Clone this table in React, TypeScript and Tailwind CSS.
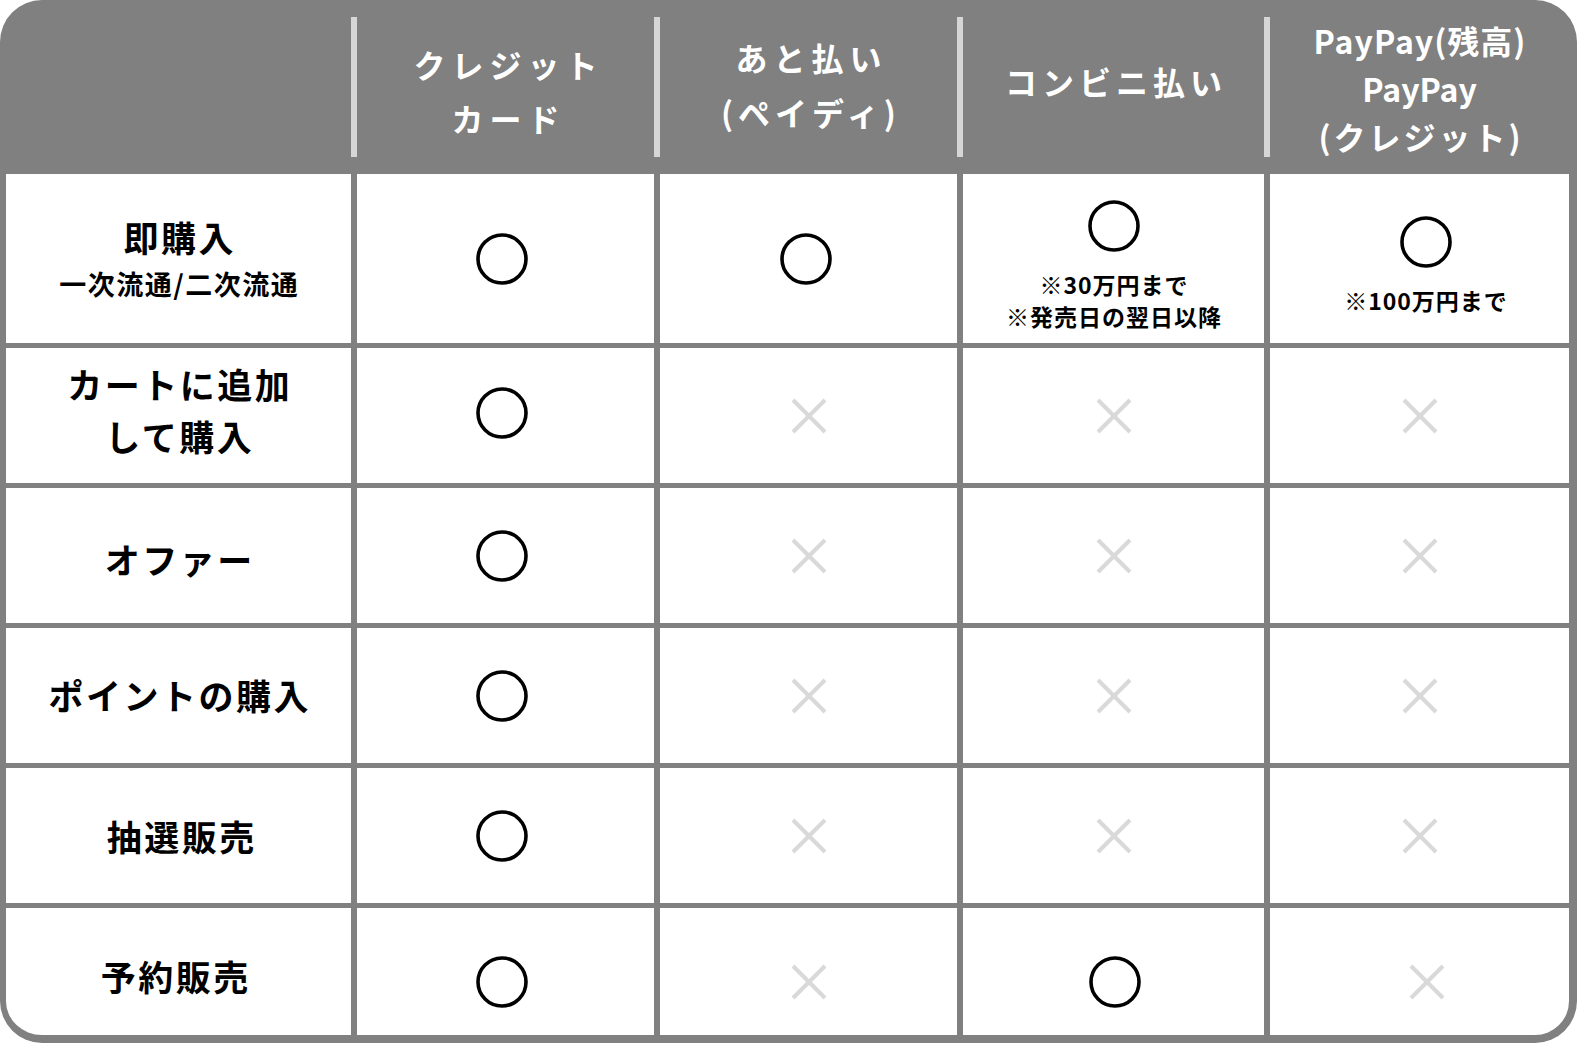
import React from 'react';

type Mark = 'o' | 'x';

interface Cell {
  mark: Mark;
  notes?: string[];
  cls?: string;
}

interface Row {
  label: string[];
  sub?: string;
  labelCls: string;
  cells: Cell[];
  last?: boolean;
}

const o: Cell = { mark: 'o', cls: 'pr-[8px]' };
const x: Cell = { mark: 'x' };

//支払い方法ごとの対応表
const rows: Row[] = [
  {
    label: ['即購入'],
    sub: '一次流通/二次流通',
    labelCls: 'pb-[8px]',
    cells: [
      o,
      { mark: 'o', cls: 'pr-[6px]' },
      { mark: 'o', notes: ['※30万円まで', '※発売日の翌日以降'], cls: 'pt-[15px]' },
      { mark: 'o', notes: ['※100万円まで'], cls: 'pt-[15px] pl-[12px]' },
    ],
  },
  { label: ['カートに追加', 'して購入'], labelCls: 'pb-[12px]', cells: [{ mark: 'o', cls: 'pr-[8px] pb-[6px]' }, x, x, x] },
  { label: ['オファー'], labelCls: 'pt-[6px]', cells: [o, x, x, x] },
  { label: ['ポイントの購入'], labelCls: 'pb-[2px]', cells: [o, x, x, x] },
  { label: ['抽選販売'], labelCls: 'pl-[4px]', cells: [o, x, x, x] },
  { label: ['予約販売'], labelCls: 'pt-[8px] pr-[8px]', cells: [o, { mark: 'x', cls: 'pt-[20px]' }, { mark: 'o', cls: 'pt-[20px] pl-[2px]' }, { mark: 'x', cls: 'pt-[20px] pl-[14px]' }], last: true },
];

const Circle = () => (
  <svg width="52" height="52" viewBox="0 0 52 52" className="shrink-0">
    <circle cx="26" cy="26" r="24" fill="none" stroke="#000" strokeWidth="3.6" />
  </svg>
);

const Cross = () => (
  <svg width="36" height="36" viewBox="0 0 36 36" className="shrink-0">
    <line x1="2" y1="2" x2="34" y2="34" stroke="#d9d9d9" strokeWidth="4" />
    <line x1="34" y1="2" x2="2" y2="34" stroke="#d9d9d9" strokeWidth="4" />
  </svg>
);

const headerCell = '-ml-[6px] mt-[11px] h-[140px] self-start border-l-[6px] border-l-[#d6d6d6] flex flex-col items-center justify-center text-white font-bold text-[32px]';

export default function App() {
  return (
    <div className="w-[1577px] h-[1046px] bg-white" style={{ fontFamily: '"Noto Sans CJK JP", "Noto Sans", sans-serif' }}>
      <div className="w-[1577px] h-[1043px] rounded-[42px] border-l-[6px] border-t-[6px] border-r-[8px] border-b-[8px] border-[#808080] bg-[#808080] overflow-hidden grid grid-cols-[345px_297px_297px_301px_1fr] grid-rows-[163px_169px_135px_135px_135px_135px_127px] gap-x-[6px] gap-y-[5px]">
        {/* ヘッダー */}
        <div />
        <div className={`${headerCell} pt-[8px]`}>
          <span className="leading-[54px] tracking-[6px] pl-[6px]">クレジット</span>
          <span className="leading-[54px] tracking-[6px] pl-[6px]">カード</span>
        </div>
        <div className={`${headerCell} pb-[4px]`}>
          <span className="leading-[55px] tracking-[6px] pl-[6px]">あと払い</span>
          <span className="leading-[55px] tracking-[5px] pl-[5px]">(ペイディ)</span>
        </div>
        <div className={`${headerCell} pb-[12px]`}>
          <span className="leading-[54px] tracking-[5px] pl-[5px]">コンビニ払い</span>
        </div>
        <div className={`${headerCell} pt-[2px]`}>
          <span className="leading-[48px] tracking-[1px] pl-[1px]">PayPay(残高)</span>
          <span className="leading-[48px] tracking-[0px]">PayPay</span>
          <span className="leading-[48px] tracking-[3px] pl-[3px]">(クレジット)</span>
        </div>

        {/* 本体 */}
        {rows.map((row, ri) => (
          <React.Fragment key={ri}>
            <div className={`bg-white flex flex-col items-center justify-center text-black font-bold ${row.labelCls}`}>
              {row.label.map((l) => (
                <span key={l} className="text-[35px] leading-[52px] tracking-[2.5px] pl-[2.5px]">{l}</span>
              ))}
              {row.sub && (
                <span className="text-[27px] leading-[30px] mt-[6px] tracking-[1.5px] pl-[1.5px]">{row.sub}</span>
              )}
            </div>
            {row.cells.map((c, ci) => (
              <div
                key={ci}
                className={`bg-white flex flex-col items-center justify-center ${row.last && ci === 0 ? 'pt-[20px]' : ''} ${c.cls ?? ''}`}
              >
                {c.mark === 'o' ? <Circle /> : <Cross />}
                {c.notes && (
                  <div className="mt-[16px] flex flex-col items-center text-black font-bold">
                    {c.notes.map((n) => (
                      <span key={n} className="text-[23px] leading-[32px] tracking-[1px] pl-[1px]">{n}</span>
                    ))}
                  </div>
                )}
              </div>
            ))}
          </React.Fragment>
        ))}
      </div>
    </div>
  );
}
